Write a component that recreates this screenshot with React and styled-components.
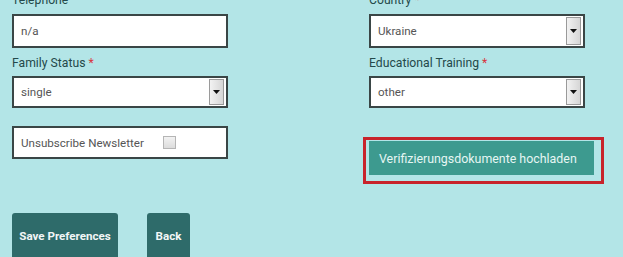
import styled, { createGlobalStyle } from 'styled-components';

const GlobalStyle = createGlobalStyle`
  html, body {
    margin: 0;
    padding: 0;
    background: #b3e5e7;
    overflow: hidden;
  }
  body {
    font-family: Roboto, 'Liberation Sans', sans-serif;
  }
`;

const Page = styled.div`
  width: 623px;
  height: 257px;
  overflow: hidden;
  background: #b3e5e7;
  padding: 0 12px;
  box-sizing: border-box;
`;

const Form = styled.div`
  display: grid;
  grid-template-columns: 216px 216px;
  column-gap: 141px;
  row-gap: 7px;
  align-items: start;
  margin-top: -8px;
`;

const Field = styled.div`
  display: flex;
  flex-direction: column;
  margin-top: ${p => p.$top || 0}px;
`;

const Label = styled.label`
  font-size: 12.2px;
  line-height: 16px;
  color: #24494a;
  margin-bottom: ${p => (p.$first ? '6px' : '5px')};
`;

const Required = styled.span`
  color: #d9363e;
  margin-left: 3px;
`;

const Box = styled.div`
  height: ${p => p.$h}px;
  box-sizing: border-box;
  background: #fff;
  border: 2px solid #3a4646;
  display: flex;
  align-items: center;
  padding: 0 2px 0 7px;
  font-size: 11.6px;
  color: #555;
`;

const Value = styled.span`
  flex: 1;
`;

const ArrowButton = styled.span`
  width: 15px;
  align-self: stretch;
  box-sizing: border-box;
  margin: 1px 0;
  border: 1px solid #9a9a9a;
  background: linear-gradient(to right, #f2f2f2, #d6d6d6);
  display: flex;
  align-items: center;
  justify-content: center;
`;

const Checkbox = styled.span`
  width: 11px;
  height: 11px;
  border: 1px solid #b5b5b5;
  background: linear-gradient(#f2f2f2, #dcdcdc);
  margin-right: 48px;
`;

const Highlight = styled.div`
  margin-left: -6px;
  width: 241px;
  box-sizing: border-box;
  border: 3px solid #c8232b;
  padding: 1px 7px 6px 3px;
`;

const UploadButton = styled.button`
  width: 225px;
  height: 34px;
  border: none;
  background: #3d9a8f;
  color: #e6f6f3;
  font-family: Roboto, 'Liberation Sans', sans-serif;
  font-size: 12.4px;
  text-align: left;
  padding: 0 0 0 10px;
`;

const Actions = styled.div`
  display: flex;
  gap: 29px;
  margin-top: 29px;
`;

const ActionButton = styled.button`
  width: ${p => p.$w}px;
  height: 46px;
  padding: 0;
  border: none;
  border-radius: 3px;
  background: #2e6b6a;
  color: #f2f6f6;
  font-family: Roboto, 'Liberation Sans', sans-serif;
  font-weight: 700;
  font-size: 11.6px;
  text-align: center;
`;

const Arrow = () => (
  <svg width="7" height="4" viewBox="0 0 7 4">
    <path d="M0 0h7L3.5 4z" fill="#111" />
  </svg>
);

const Select = ({ value, h = 32 }) => (
  <Box $h={h}>
    <Value>{value}</Value>
    <ArrowButton>
      <Arrow />
    </ArrowButton>
  </Box>
);

export default function App() {
  return (
    <Page>
      <GlobalStyle />
      <Form>
        <Field>
          <Label $first>Telephone</Label>
          <Box $h={34}>
            <Value>n/a</Value>
          </Box>
        </Field>
        <Field>
          <Label $first>Country<Required>*</Required></Label>
          <Select value="Ukraine" h={34} />
        </Field>
        <Field>
          <Label>Family Status<Required>*</Required></Label>
          <Select value="single" />
        </Field>
        <Field>
          <Label>Educational Training<Required>*</Required></Label>
          <Select value="other" />
        </Field>
        <Field $top={11}>
          <Box $h={33}>
            <Value>Unsubscribe Newsletter</Value>
            <Checkbox />
          </Box>
        </Field>
        <Field $top={22}>
          <Highlight>
            <UploadButton>Verifizierungsdokumente hochladen</UploadButton>
          </Highlight>
        </Field>
      </Form>
      <Actions>
        <ActionButton $w={106}>Save Preferences</ActionButton>
        <ActionButton $w={43}>Back</ActionButton>
      </Actions>
    </Page>
  );
}
